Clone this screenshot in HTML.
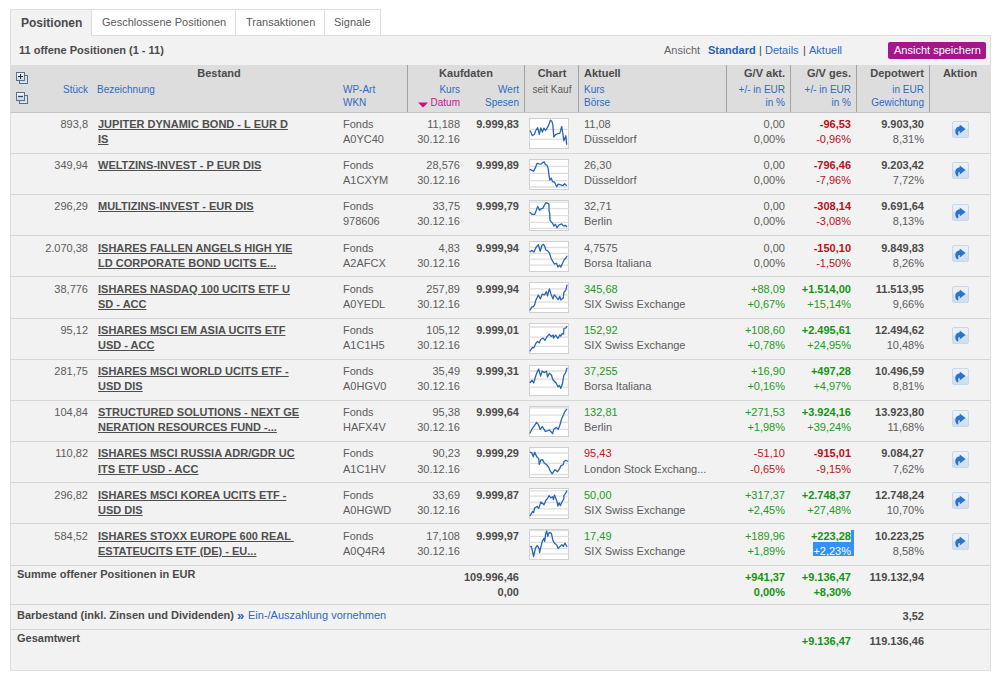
<!DOCTYPE html>
<html><head><meta charset="utf-8"><style>
html,body{margin:0;padding:0;background:#fff;width:1000px;height:681px;overflow:hidden;position:relative;font-family:"Liberation Sans", sans-serif;}
.t{position:absolute;white-space:pre;line-height:14px;}
.panel{position:absolute;left:10px;top:35px;width:979px;height:634px;background:#f2f2f2;border:1px solid #dedede;}
.tab{position:absolute;top:9px;height:25px;background:#fff;border:1px solid #dedede;border-left:none;}
.hdr{position:absolute;left:11px;top:65px;width:979px;height:47px;background:#dddddd;border-bottom:1px solid #c4c4c4;}
.vl{position:absolute;top:65px;width:1px;height:47px;background:#a2a2a2;}
.sep{position:absolute;left:11px;width:979px;height:1px;background:#d6d6d6;}
.ch{position:absolute;left:529px;}
.act{position:absolute;left:952px;width:15px;height:15px;border:1px solid #c6d8ee;border-radius:2px;background:linear-gradient(#e9f1fa 0%,#e6eef8 45%,#d6e2ef 50%,#d3dfec 100%);}
.act svg{position:absolute;left:-1px;top:-1px;}
.btn{position:absolute;left:888px;top:42px;width:98px;height:17px;background:#a4168c;border-radius:2px;}
</style></head><body>
<div class="panel"></div>
<div style="position:absolute;left:10px;top:9px;width:80px;height:26px;background:#f2f2f2;border:1px solid #dedede;border-bottom:none;border-right:none"></div>
<div class="tab" style="left:91px;width:143px;border-left:1px solid #dedede"></div>
<div class="tab" style="left:236px;width:88px"></div>
<div class="tab" style="left:325px;width:55px"></div>
<div class="t" style="left:21px;top:16px;font-size:12px;font-weight:bold;color:#4b4b4b">Positionen</div>
<div class="t" style="left:102px;top:15px;font-size:11px;color:#5a5a5a">Geschlossene Positionen</div>
<div class="t" style="left:246px;top:15px;font-size:11px;color:#5a5a5a">Transaktionen</div>
<div class="t" style="left:334px;top:15px;font-size:11px;color:#5a5a5a">Signale</div>
<div class="t" style="left:19px;top:43px;font-size:11px;font-weight:bold;color:#4b4b4b">11 offene Positionen (1 - 11)</div>
<div class="t" style="left:664px;top:43px;font-size:11px;color:#666">Ansicht</div>
<div class="t" style="left:708px;top:43px;font-size:11px;font-weight:bold;color:#2a62b4">Standard</div>
<div class="t" style="left:759px;top:43px;font-size:11px;color:#444">|</div>
<div class="t" style="left:765px;top:43px;font-size:11px;color:#2a6ac0">Details</div>
<div class="t" style="left:803px;top:43px;font-size:11px;color:#444">|</div>
<div class="t" style="left:809px;top:43px;font-size:11px;color:#2a6ac0">Aktuell</div>
<div class="btn"></div>
<div class="t" style="left:894px;top:43px;font-size:11px;color:#fff">Ansicht speichern</div>
<div class="hdr"></div>
<div class="vl" style="left:407px"></div>
<div class="vl" style="left:524px"></div>
<div class="vl" style="left:578px"></div>
<div class="vl" style="left:726px"></div>
<div class="vl" style="left:790px"></div>
<div class="vl" style="left:856px"></div>
<div class="vl" style="left:929px"></div>
<div class="t" style="top:66px;font-size:11px;color:#4b4b4b;font-weight:bold;left:119px;width:200px;text-align:center;">Bestand</div>
<div class="t" style="top:83px;font-size:10px;color:#2f6bc0;right:912px;text-align:right;">Stück</div>
<div class="t" style="top:83px;font-size:10px;color:#2f6bc0;left:97px;">Bezeichnung</div>
<div class="t" style="top:83px;font-size:10px;color:#2f6bc0;left:343px;">WP-Art</div>
<div class="t" style="top:96px;font-size:10px;color:#2f6bc0;left:343px;">WKN</div>
<div class="t" style="top:66px;font-size:11px;color:#4b4b4b;font-weight:bold;left:366px;width:200px;text-align:center;">Kaufdaten</div>
<div class="t" style="top:83px;font-size:10px;color:#2f6bc0;right:540px;text-align:right;">Kurs</div>
<div class="t" style="top:96px;font-size:10px;color:#c0189c;right:540px;text-align:right;">Datum</div>
<svg style="position:absolute;left:418px;top:102px" width="10" height="6" viewBox="0 0 10 6"><path d="M0 0.5 L10 0.5 L5 5.5 Z" fill="#d8087e"/></svg>
<div class="t" style="top:83px;font-size:10px;color:#2f6bc0;right:481px;text-align:right;">Wert</div>
<div class="t" style="top:96px;font-size:10px;color:#2f6bc0;right:481px;text-align:right;">Spesen</div>
<div class="t" style="top:66px;font-size:11px;color:#4b4b4b;font-weight:bold;left:452px;width:200px;text-align:center;">Chart</div>
<div class="t" style="top:83px;font-size:10px;color:#5c5c5c;left:452px;width:200px;text-align:center;">seit Kauf</div>
<div class="t" style="top:66px;font-size:11px;color:#4b4b4b;font-weight:bold;left:584px;">Aktuell</div>
<div class="t" style="top:83px;font-size:10px;color:#2f6bc0;left:584px;">Kurs</div>
<div class="t" style="top:96px;font-size:10px;color:#2f6bc0;left:584px;">Börse</div>
<div class="t" style="top:66px;font-size:11px;color:#4b4b4b;font-weight:bold;right:215px;text-align:right;">G/V akt.</div>
<div class="t" style="top:83px;font-size:10px;color:#2f6bc0;right:215px;text-align:right;">+/- in EUR</div>
<div class="t" style="top:96px;font-size:10px;color:#2f6bc0;right:215px;text-align:right;">in %</div>
<div class="t" style="top:66px;font-size:11px;color:#4b4b4b;font-weight:bold;right:149px;text-align:right;">G/V ges.</div>
<div class="t" style="top:83px;font-size:10px;color:#2f6bc0;right:149px;text-align:right;">+/- in EUR</div>
<div class="t" style="top:96px;font-size:10px;color:#2f6bc0;right:149px;text-align:right;">in %</div>
<div class="t" style="top:66px;font-size:11px;color:#4b4b4b;font-weight:bold;right:76px;text-align:right;">Depotwert</div>
<div class="t" style="top:83px;font-size:10px;color:#2f6bc0;right:76px;text-align:right;">in EUR</div>
<div class="t" style="top:96px;font-size:10px;color:#2f6bc0;right:76px;text-align:right;">Gewichtung</div>
<div class="t" style="top:66px;font-size:11px;color:#4b4b4b;font-weight:bold;left:860px;width:200px;text-align:center;">Aktion</div>
<svg style="position:absolute;left:16px;top:72px" width="13" height="13" viewBox="0 0 13 13">
<defs><linearGradient id="gi" x1="0" y1="0" x2="0" y2="1"><stop offset="0" stop-color="#f4f7fb"/><stop offset="1" stop-color="#c9d8ea"/></linearGradient></defs>
<rect x="3.5" y="3.5" width="8" height="8" fill="#d5e2f0" stroke="#5b6f8a"/>
<rect x="0.5" y="0.5" width="8" height="8" fill="url(#gi)" stroke="#5b6f8a"/>
<path d="M4.5 2 V7 M2 4.5 H7" stroke="#1f2a3a" stroke-width="1"/></svg>
<svg style="position:absolute;left:16px;top:92px" width="13" height="13" viewBox="0 0 13 13">
<rect x="3.5" y="3.5" width="8" height="8" fill="#d5e2f0" stroke="#5b6f8a"/>
<rect x="0.5" y="0.5" width="8" height="8" fill="url(#gi)" stroke="#5b6f8a"/>
<path d="M2 4.5 H7" stroke="#3a4658" stroke-width="1.3"/></svg>
<div class="t" style="top:117px;font-size:11px;right:912px;text-align:right;color:#5c5c5c;">893,8</div>
<div class="t" style="top:117px;font-size:11px;left:98px;font-weight:bold;color:#4f4f4f;text-decoration:underline;">JUPITER DYNAMIC BOND - L EUR D</div>
<div class="t" style="top:132px;font-size:11px;left:98px;font-weight:bold;color:#4f4f4f;text-decoration:underline;">IS</div>
<div class="t" style="top:117px;font-size:11px;left:343px;color:#5c5c5c;">Fonds</div>
<div class="t" style="top:132px;font-size:11px;left:343px;color:#5c5c5c;">A0YC40</div>
<div class="t" style="top:117px;font-size:11px;right:540px;text-align:right;color:#5c5c5c;">11,188</div>
<div class="t" style="top:132px;font-size:11px;right:540px;text-align:right;color:#5c5c5c;">30.12.16</div>
<div class="t" style="top:117px;font-size:11px;right:481px;text-align:right;font-weight:bold;color:#4b4b4b;">9.999,83</div>
<div class="t" style="top:117px;font-size:11px;left:584px;color:#5c5c5c;">11,08</div>
<div class="t" style="top:132px;font-size:11px;left:584px;color:#5c5c5c;">Düsseldorf</div>
<div class="t" style="top:117px;font-size:11px;right:215px;text-align:right;color:#5c5c5c;">0,00</div>
<div class="t" style="top:132px;font-size:11px;right:215px;text-align:right;color:#5c5c5c;">0,00%</div>
<div class="t" style="top:117px;font-size:11px;right:149px;text-align:right;font-weight:bold;color:#b8101a;">-96,53</div>
<div class="t" style="top:132px;font-size:11px;right:149px;text-align:right;color:#b8101a;">-0,96%</div>
<div class="t" style="top:117px;font-size:11px;right:76px;text-align:right;font-weight:bold;color:#4b4b4b;">9.903,30</div>
<div class="t" style="top:132px;font-size:11px;right:76px;text-align:right;color:#5c5c5c;">8,31%</div>
<svg class="ch" style="top:118px" width="40" height="31" viewBox="0 0 40 31"><rect x="0.5" y="0.5" width="39" height="30" fill="#fff" stroke="#d0d0d0"/><g stroke="#dedede" stroke-width="1.3"><line x1="0" x2="40" y1="11.3" y2="11.3"/><line x1="0" x2="40" y1="21.4" y2="21.4"/></g><polyline fill="none" stroke="#2a66b4" stroke-width="1.3" stroke-linejoin="round" points="1.1,12.5 3.3,17.6 5.5,16.3 6.8,12.5 8.7,9.7 10.3,16.3 11.8,10.0 13.4,14.1 15.0,10.0 16.6,12.5 19.1,8.4 21.6,2.1 22.9,3.4 23.8,6.5 24.8,19.2 26.7,16.3 29.2,15.7 30.8,15.4 32.7,8.4 33.6,14.1 34.9,22.9 36.8,17.6 37.7,26.8"/></svg>
<div class="act" style="top:121px"><svg width="17" height="17" viewBox="0 0 17 17"><path d="M7.75 3.4 L13.6 7.9 L7.75 12.4 L7.75 10.0 C7.0 10.0 6.3 10.5 6.2 11.2 C6.1 12.0 6.6 12.8 6.4 13.6 C6.2 14.4 5.6 14.6 5.2 14.3 C3.8 13.4 3.1 11.3 3.3 9.4 C3.6 7.0 5.4 5.4 7.75 5.2 Z" fill="#2a74cc"/></svg></div>
<div class="sep" style="top:153px"></div>
<div class="t" style="top:158px;font-size:11px;right:912px;text-align:right;color:#5c5c5c;">349,94</div>
<div class="t" style="top:158px;font-size:11px;left:98px;font-weight:bold;color:#4f4f4f;text-decoration:underline;">WELTZINS-INVEST - P EUR DIS</div>
<div class="t" style="top:158px;font-size:11px;left:343px;color:#5c5c5c;">Fonds</div>
<div class="t" style="top:173px;font-size:11px;left:343px;color:#5c5c5c;">A1CXYM</div>
<div class="t" style="top:158px;font-size:11px;right:540px;text-align:right;color:#5c5c5c;">28,576</div>
<div class="t" style="top:173px;font-size:11px;right:540px;text-align:right;color:#5c5c5c;">30.12.16</div>
<div class="t" style="top:158px;font-size:11px;right:481px;text-align:right;font-weight:bold;color:#4b4b4b;">9.999,89</div>
<div class="t" style="top:158px;font-size:11px;left:584px;color:#5c5c5c;">26,30</div>
<div class="t" style="top:173px;font-size:11px;left:584px;color:#5c5c5c;">Düsseldorf</div>
<div class="t" style="top:158px;font-size:11px;right:215px;text-align:right;color:#5c5c5c;">0,00</div>
<div class="t" style="top:173px;font-size:11px;right:215px;text-align:right;color:#5c5c5c;">0,00%</div>
<div class="t" style="top:158px;font-size:11px;right:149px;text-align:right;font-weight:bold;color:#b8101a;">-796,46</div>
<div class="t" style="top:173px;font-size:11px;right:149px;text-align:right;color:#b8101a;">-7,96%</div>
<div class="t" style="top:158px;font-size:11px;right:76px;text-align:right;font-weight:bold;color:#4b4b4b;">9.203,42</div>
<div class="t" style="top:173px;font-size:11px;right:76px;text-align:right;color:#5c5c5c;">7,72%</div>
<svg class="ch" style="top:159px" width="40" height="31" viewBox="0 0 40 31"><rect x="0.5" y="0.5" width="39" height="30" fill="#fff" stroke="#d0d0d0"/><g stroke="#dedede" stroke-width="1.3"><line x1="0" x2="40" y1="7.3" y2="7.3"/><line x1="0" x2="40" y1="14.4" y2="14.4"/><line x1="0" x2="40" y1="21.7" y2="21.7"/><line x1="0" x2="40" y1="28.0" y2="28.0"/></g><polyline fill="none" stroke="#2a66b4" stroke-width="1.3" stroke-linejoin="round" points="0.8,10.3 4.6,12.2 6.5,8.4 8.1,4.3 10.3,4.9 12.2,5.2 13.8,3.3 15.3,3.0 16.3,5.6 17.9,6.2 19.1,9.0 19.8,14.7 20.7,21.0 22.3,19.1 23.6,22.9 25.5,22.9 27.7,27.7 29.2,25.1 31.8,25.8 33.7,26.7 35.6,24.8 37.8,26.7"/></svg>
<div class="act" style="top:162px"><svg width="17" height="17" viewBox="0 0 17 17"><path d="M7.75 3.4 L13.6 7.9 L7.75 12.4 L7.75 10.0 C7.0 10.0 6.3 10.5 6.2 11.2 C6.1 12.0 6.6 12.8 6.4 13.6 C6.2 14.4 5.6 14.6 5.2 14.3 C3.8 13.4 3.1 11.3 3.3 9.4 C3.6 7.0 5.4 5.4 7.75 5.2 Z" fill="#2a74cc"/></svg></div>
<div class="sep" style="top:194px"></div>
<div class="t" style="top:199px;font-size:11px;right:912px;text-align:right;color:#5c5c5c;">296,29</div>
<div class="t" style="top:199px;font-size:11px;left:98px;font-weight:bold;color:#4f4f4f;text-decoration:underline;">MULTIZINS-INVEST - EUR DIS</div>
<div class="t" style="top:199px;font-size:11px;left:343px;color:#5c5c5c;">Fonds</div>
<div class="t" style="top:214px;font-size:11px;left:343px;color:#5c5c5c;">978606</div>
<div class="t" style="top:199px;font-size:11px;right:540px;text-align:right;color:#5c5c5c;">33,75</div>
<div class="t" style="top:214px;font-size:11px;right:540px;text-align:right;color:#5c5c5c;">30.12.16</div>
<div class="t" style="top:199px;font-size:11px;right:481px;text-align:right;font-weight:bold;color:#4b4b4b;">9.999,79</div>
<div class="t" style="top:199px;font-size:11px;left:584px;color:#5c5c5c;">32,71</div>
<div class="t" style="top:214px;font-size:11px;left:584px;color:#5c5c5c;">Berlin</div>
<div class="t" style="top:199px;font-size:11px;right:215px;text-align:right;color:#5c5c5c;">0,00</div>
<div class="t" style="top:214px;font-size:11px;right:215px;text-align:right;color:#5c5c5c;">0,00%</div>
<div class="t" style="top:199px;font-size:11px;right:149px;text-align:right;font-weight:bold;color:#b8101a;">-308,14</div>
<div class="t" style="top:214px;font-size:11px;right:149px;text-align:right;color:#b8101a;">-3,08%</div>
<div class="t" style="top:199px;font-size:11px;right:76px;text-align:right;font-weight:bold;color:#4b4b4b;">9.691,64</div>
<div class="t" style="top:214px;font-size:11px;right:76px;text-align:right;color:#5c5c5c;">8,13%</div>
<svg class="ch" style="top:200px" width="40" height="31" viewBox="0 0 40 31"><rect x="0.5" y="0.5" width="39" height="30" fill="#fff" stroke="#d0d0d0"/><g stroke="#dedede" stroke-width="1.3"><line x1="0" x2="40" y1="2.1" y2="2.1"/><line x1="0" x2="40" y1="8.6" y2="8.6"/><line x1="0" x2="40" y1="15.7" y2="15.7"/><line x1="0" x2="40" y1="22.3" y2="22.3"/><line x1="0" x2="40" y1="28.3" y2="28.3"/></g><polyline fill="none" stroke="#2a66b4" stroke-width="1.3" stroke-linejoin="round" points="0.8,12.2 3.3,14.4 5.8,14.4 8.7,6.5 10.6,10.3 12.2,8.7 13.7,8.4 15.0,5.9 16.9,2.7 18.5,3.4 19.8,3.7 20.1,11.6 20.7,12.9 21.0,20.4 23.8,23.6 24.8,26.1 26.4,24.2 28.0,27.7 29.8,25.1 32.7,23.9 34.3,25.8 36.5,25.5 38.1,27.1"/></svg>
<div class="act" style="top:204px"><svg width="17" height="17" viewBox="0 0 17 17"><path d="M7.75 3.4 L13.6 7.9 L7.75 12.4 L7.75 10.0 C7.0 10.0 6.3 10.5 6.2 11.2 C6.1 12.0 6.6 12.8 6.4 13.6 C6.2 14.4 5.6 14.6 5.2 14.3 C3.8 13.4 3.1 11.3 3.3 9.4 C3.6 7.0 5.4 5.4 7.75 5.2 Z" fill="#2a74cc"/></svg></div>
<div class="sep" style="top:235px"></div>
<div class="t" style="top:241px;font-size:11px;right:912px;text-align:right;color:#5c5c5c;">2.070,38</div>
<div class="t" style="top:241px;font-size:11px;left:98px;font-weight:bold;color:#4f4f4f;text-decoration:underline;">ISHARES FALLEN ANGELS HIGH YIE</div>
<div class="t" style="top:256px;font-size:11px;left:98px;font-weight:bold;color:#4f4f4f;text-decoration:underline;">LD CORPORATE BOND UCITS E...</div>
<div class="t" style="top:241px;font-size:11px;left:343px;color:#5c5c5c;">Fonds</div>
<div class="t" style="top:256px;font-size:11px;left:343px;color:#5c5c5c;">A2AFCX</div>
<div class="t" style="top:241px;font-size:11px;right:540px;text-align:right;color:#5c5c5c;">4,83</div>
<div class="t" style="top:256px;font-size:11px;right:540px;text-align:right;color:#5c5c5c;">30.12.16</div>
<div class="t" style="top:241px;font-size:11px;right:481px;text-align:right;font-weight:bold;color:#4b4b4b;">9.999,94</div>
<div class="t" style="top:241px;font-size:11px;left:584px;color:#5c5c5c;">4,7575</div>
<div class="t" style="top:256px;font-size:11px;left:584px;color:#5c5c5c;">Borsa Italiana</div>
<div class="t" style="top:241px;font-size:11px;right:215px;text-align:right;color:#5c5c5c;">0,00</div>
<div class="t" style="top:256px;font-size:11px;right:215px;text-align:right;color:#5c5c5c;">0,00%</div>
<div class="t" style="top:241px;font-size:11px;right:149px;text-align:right;font-weight:bold;color:#b8101a;">-150,10</div>
<div class="t" style="top:256px;font-size:11px;right:149px;text-align:right;color:#b8101a;">-1,50%</div>
<div class="t" style="top:241px;font-size:11px;right:76px;text-align:right;font-weight:bold;color:#4b4b4b;">9.849,83</div>
<div class="t" style="top:256px;font-size:11px;right:76px;text-align:right;color:#5c5c5c;">8,26%</div>
<svg class="ch" style="top:241px" width="40" height="31" viewBox="0 0 40 31"><rect x="0.5" y="0.5" width="39" height="30" fill="#fff" stroke="#d0d0d0"/><g stroke="#dedede" stroke-width="1.3"><line x1="0" x2="40" y1="6.5" y2="6.5"/><line x1="0" x2="40" y1="12.5" y2="12.5"/><line x1="0" x2="40" y1="18.2" y2="18.2"/><line x1="0" x2="40" y1="24.2" y2="24.2"/></g><polyline fill="none" stroke="#2a66b4" stroke-width="1.3" stroke-linejoin="round" points="0.8,11.0 3.0,9.4 4.9,11.0 7.1,6.2 9.3,3.7 11.2,10.3 13.1,4.0 14.4,3.4 15.6,5.2 16.9,9.0 18.5,9.7 20.4,11.9 22.0,17.0 23.8,20.7 25.7,23.0 27.6,22.3 28.9,26.1 30.5,24.2 31.7,26.1 33.6,22.3 35.2,18.8 36.8,17.2 38.1,14.7"/></svg>
<div class="act" style="top:245px"><svg width="17" height="17" viewBox="0 0 17 17"><path d="M7.75 3.4 L13.6 7.9 L7.75 12.4 L7.75 10.0 C7.0 10.0 6.3 10.5 6.2 11.2 C6.1 12.0 6.6 12.8 6.4 13.6 C6.2 14.4 5.6 14.6 5.2 14.3 C3.8 13.4 3.1 11.3 3.3 9.4 C3.6 7.0 5.4 5.4 7.75 5.2 Z" fill="#2a74cc"/></svg></div>
<div class="sep" style="top:276px"></div>
<div class="t" style="top:282px;font-size:11px;right:912px;text-align:right;color:#5c5c5c;">38,776</div>
<div class="t" style="top:282px;font-size:11px;left:98px;font-weight:bold;color:#4f4f4f;text-decoration:underline;">ISHARES NASDAQ 100 UCITS ETF U</div>
<div class="t" style="top:297px;font-size:11px;left:98px;font-weight:bold;color:#4f4f4f;text-decoration:underline;">SD - ACC</div>
<div class="t" style="top:282px;font-size:11px;left:343px;color:#5c5c5c;">Fonds</div>
<div class="t" style="top:297px;font-size:11px;left:343px;color:#5c5c5c;">A0YEDL</div>
<div class="t" style="top:282px;font-size:11px;right:540px;text-align:right;color:#5c5c5c;">257,89</div>
<div class="t" style="top:297px;font-size:11px;right:540px;text-align:right;color:#5c5c5c;">30.12.16</div>
<div class="t" style="top:282px;font-size:11px;right:481px;text-align:right;font-weight:bold;color:#4b4b4b;">9.999,94</div>
<div class="t" style="top:282px;font-size:11px;left:584px;color:#1e9a1e;">345,68</div>
<div class="t" style="top:297px;font-size:11px;left:584px;color:#5c5c5c;">SIX Swiss Exchange</div>
<div class="t" style="top:282px;font-size:11px;right:215px;text-align:right;color:#1e9a1e;">+88,09</div>
<div class="t" style="top:297px;font-size:11px;right:215px;text-align:right;color:#1e9a1e;">+0,67%</div>
<div class="t" style="top:282px;font-size:11px;right:149px;text-align:right;font-weight:bold;color:#149414;">+1.514,00</div>
<div class="t" style="top:297px;font-size:11px;right:149px;text-align:right;color:#1e9a1e;">+15,14%</div>
<div class="t" style="top:282px;font-size:11px;right:76px;text-align:right;font-weight:bold;color:#4b4b4b;">11.513,95</div>
<div class="t" style="top:297px;font-size:11px;right:76px;text-align:right;color:#5c5c5c;">9,66%</div>
<svg class="ch" style="top:282px" width="40" height="31" viewBox="0 0 40 31"><rect x="0.5" y="0.5" width="39" height="30" fill="#fff" stroke="#d0d0d0"/><g stroke="#dedede" stroke-width="1.3"><line x1="0" x2="40" y1="6.8" y2="6.8"/><line x1="0" x2="40" y1="13.2" y2="13.2"/><line x1="0" x2="40" y1="20.1" y2="20.1"/><line x1="0" x2="40" y1="26.4" y2="26.4"/></g><polyline fill="none" stroke="#2a66b4" stroke-width="1.3" stroke-linejoin="round" points="0.8,28.3 3.0,24.8 4.6,24.5 5.9,22.0 6.8,18.2 9.3,13.1 11.5,16.9 13.1,12.2 15.6,12.8 17.5,9.7 18.5,13.8 20.4,6.8 22.0,11.9 23.8,16.9 25.4,12.8 29.2,17.6 30.8,14.4 31.7,17.9 34.3,16.0 34.9,10.3 36.8,8.4 38.1,2.7"/></svg>
<div class="act" style="top:286px"><svg width="17" height="17" viewBox="0 0 17 17"><path d="M7.75 3.4 L13.6 7.9 L7.75 12.4 L7.75 10.0 C7.0 10.0 6.3 10.5 6.2 11.2 C6.1 12.0 6.6 12.8 6.4 13.6 C6.2 14.4 5.6 14.6 5.2 14.3 C3.8 13.4 3.1 11.3 3.3 9.4 C3.6 7.0 5.4 5.4 7.75 5.2 Z" fill="#2a74cc"/></svg></div>
<div class="sep" style="top:318px"></div>
<div class="t" style="top:323px;font-size:11px;right:912px;text-align:right;color:#5c5c5c;">95,12</div>
<div class="t" style="top:323px;font-size:11px;left:98px;font-weight:bold;color:#4f4f4f;text-decoration:underline;">ISHARES MSCI EM ASIA UCITS ETF</div>
<div class="t" style="top:338px;font-size:11px;left:98px;font-weight:bold;color:#4f4f4f;text-decoration:underline;">USD - ACC</div>
<div class="t" style="top:323px;font-size:11px;left:343px;color:#5c5c5c;">Fonds</div>
<div class="t" style="top:338px;font-size:11px;left:343px;color:#5c5c5c;">A1C1H5</div>
<div class="t" style="top:323px;font-size:11px;right:540px;text-align:right;color:#5c5c5c;">105,12</div>
<div class="t" style="top:338px;font-size:11px;right:540px;text-align:right;color:#5c5c5c;">30.12.16</div>
<div class="t" style="top:323px;font-size:11px;right:481px;text-align:right;font-weight:bold;color:#4b4b4b;">9.999,01</div>
<div class="t" style="top:323px;font-size:11px;left:584px;color:#1e9a1e;">152,92</div>
<div class="t" style="top:338px;font-size:11px;left:584px;color:#5c5c5c;">SIX Swiss Exchange</div>
<div class="t" style="top:323px;font-size:11px;right:215px;text-align:right;color:#1e9a1e;">+108,60</div>
<div class="t" style="top:338px;font-size:11px;right:215px;text-align:right;color:#1e9a1e;">+0,78%</div>
<div class="t" style="top:323px;font-size:11px;right:149px;text-align:right;font-weight:bold;color:#149414;">+2.495,61</div>
<div class="t" style="top:338px;font-size:11px;right:149px;text-align:right;color:#1e9a1e;">+24,95%</div>
<div class="t" style="top:323px;font-size:11px;right:76px;text-align:right;font-weight:bold;color:#4b4b4b;">12.494,62</div>
<div class="t" style="top:338px;font-size:11px;right:76px;text-align:right;color:#5c5c5c;">10,48%</div>
<svg class="ch" style="top:323px" width="40" height="31" viewBox="0 0 40 31"><rect x="0.5" y="0.5" width="39" height="30" fill="#fff" stroke="#d0d0d0"/><g stroke="#dedede" stroke-width="1.3"><line x1="0" x2="40" y1="4.0" y2="4.0"/><line x1="0" x2="40" y1="14.1" y2="14.1"/><line x1="0" x2="40" y1="23.3" y2="23.3"/></g><polyline fill="none" stroke="#2a66b4" stroke-width="1.3" stroke-linejoin="round" points="0.8,28.3 3.3,24.5 4.9,24.8 6.8,20.4 8.4,18.5 10.3,19.8 11.9,16.3 14.1,15.1 16.0,17.3 17.9,13.8 20.4,11.3 22.3,13.5 24.2,11.9 24.5,15.1 26.7,12.2 28.9,15.4 30.8,11.9 31.8,13.2 33.0,10.6 34.6,11.0 34.9,5.6 36.8,5.0 38.1,3.1"/></svg>
<div class="act" style="top:327px"><svg width="17" height="17" viewBox="0 0 17 17"><path d="M7.75 3.4 L13.6 7.9 L7.75 12.4 L7.75 10.0 C7.0 10.0 6.3 10.5 6.2 11.2 C6.1 12.0 6.6 12.8 6.4 13.6 C6.2 14.4 5.6 14.6 5.2 14.3 C3.8 13.4 3.1 11.3 3.3 9.4 C3.6 7.0 5.4 5.4 7.75 5.2 Z" fill="#2a74cc"/></svg></div>
<div class="sep" style="top:359px"></div>
<div class="t" style="top:364px;font-size:11px;right:912px;text-align:right;color:#5c5c5c;">281,75</div>
<div class="t" style="top:364px;font-size:11px;left:98px;font-weight:bold;color:#4f4f4f;text-decoration:underline;">ISHARES MSCI WORLD UCITS ETF -</div>
<div class="t" style="top:379px;font-size:11px;left:98px;font-weight:bold;color:#4f4f4f;text-decoration:underline;">USD DIS</div>
<div class="t" style="top:364px;font-size:11px;left:343px;color:#5c5c5c;">Fonds</div>
<div class="t" style="top:379px;font-size:11px;left:343px;color:#5c5c5c;">A0HGV0</div>
<div class="t" style="top:364px;font-size:11px;right:540px;text-align:right;color:#5c5c5c;">35,49</div>
<div class="t" style="top:379px;font-size:11px;right:540px;text-align:right;color:#5c5c5c;">30.12.16</div>
<div class="t" style="top:364px;font-size:11px;right:481px;text-align:right;font-weight:bold;color:#4b4b4b;">9.999,31</div>
<div class="t" style="top:364px;font-size:11px;left:584px;color:#1e9a1e;">37,255</div>
<div class="t" style="top:379px;font-size:11px;left:584px;color:#5c5c5c;">Borsa Italiana</div>
<div class="t" style="top:364px;font-size:11px;right:215px;text-align:right;color:#1e9a1e;">+16,90</div>
<div class="t" style="top:379px;font-size:11px;right:215px;text-align:right;color:#1e9a1e;">+0,16%</div>
<div class="t" style="top:364px;font-size:11px;right:149px;text-align:right;font-weight:bold;color:#149414;">+497,28</div>
<div class="t" style="top:379px;font-size:11px;right:149px;text-align:right;color:#1e9a1e;">+4,97%</div>
<div class="t" style="top:364px;font-size:11px;right:76px;text-align:right;font-weight:bold;color:#4b4b4b;">10.496,59</div>
<div class="t" style="top:379px;font-size:11px;right:76px;text-align:right;color:#5c5c5c;">8,81%</div>
<svg class="ch" style="top:365px" width="40" height="31" viewBox="0 0 40 31"><rect x="0.5" y="0.5" width="39" height="30" fill="#fff" stroke="#d0d0d0"/><g stroke="#dedede" stroke-width="1.3"><line x1="0" x2="40" y1="6.0" y2="6.0"/><line x1="0" x2="40" y1="14.2" y2="14.2"/><line x1="0" x2="40" y1="22.1" y2="22.1"/></g><polyline fill="none" stroke="#2a66b4" stroke-width="1.3" stroke-linejoin="round" points="0.8,18.0 3.0,15.2 4.6,18.0 6.5,11.7 7.8,7.9 9.7,4.1 11.6,11.1 13.1,6.0 15.3,7.6 17.6,6.3 18.5,12.0 20.4,8.2 22.3,9.8 23.9,14.8 27.3,18.3 28.9,21.8 30.5,20.5 31.8,23.4 33.3,19.3 34.9,10.1 36.5,7.9 38.1,2.8"/></svg>
<div class="act" style="top:368px"><svg width="17" height="17" viewBox="0 0 17 17"><path d="M7.75 3.4 L13.6 7.9 L7.75 12.4 L7.75 10.0 C7.0 10.0 6.3 10.5 6.2 11.2 C6.1 12.0 6.6 12.8 6.4 13.6 C6.2 14.4 5.6 14.6 5.2 14.3 C3.8 13.4 3.1 11.3 3.3 9.4 C3.6 7.0 5.4 5.4 7.75 5.2 Z" fill="#2a74cc"/></svg></div>
<div class="sep" style="top:400px"></div>
<div class="t" style="top:405px;font-size:11px;right:912px;text-align:right;color:#5c5c5c;">104,84</div>
<div class="t" style="top:405px;font-size:11px;left:98px;font-weight:bold;color:#4f4f4f;text-decoration:underline;">STRUCTURED SOLUTIONS - NEXT GE</div>
<div class="t" style="top:420px;font-size:11px;left:98px;font-weight:bold;color:#4f4f4f;text-decoration:underline;">NERATION RESOURCES FUND -...</div>
<div class="t" style="top:405px;font-size:11px;left:343px;color:#5c5c5c;">Fonds</div>
<div class="t" style="top:420px;font-size:11px;left:343px;color:#5c5c5c;">HAFX4V</div>
<div class="t" style="top:405px;font-size:11px;right:540px;text-align:right;color:#5c5c5c;">95,38</div>
<div class="t" style="top:420px;font-size:11px;right:540px;text-align:right;color:#5c5c5c;">30.12.16</div>
<div class="t" style="top:405px;font-size:11px;right:481px;text-align:right;font-weight:bold;color:#4b4b4b;">9.999,64</div>
<div class="t" style="top:405px;font-size:11px;left:584px;color:#1e9a1e;">132,81</div>
<div class="t" style="top:420px;font-size:11px;left:584px;color:#5c5c5c;">Berlin</div>
<div class="t" style="top:405px;font-size:11px;right:215px;text-align:right;color:#1e9a1e;">+271,53</div>
<div class="t" style="top:420px;font-size:11px;right:215px;text-align:right;color:#1e9a1e;">+1,98%</div>
<div class="t" style="top:405px;font-size:11px;right:149px;text-align:right;font-weight:bold;color:#149414;">+3.924,16</div>
<div class="t" style="top:420px;font-size:11px;right:149px;text-align:right;color:#1e9a1e;">+39,24%</div>
<div class="t" style="top:405px;font-size:11px;right:76px;text-align:right;font-weight:bold;color:#4b4b4b;">13.923,80</div>
<div class="t" style="top:420px;font-size:11px;right:76px;text-align:right;color:#5c5c5c;">11,68%</div>
<svg class="ch" style="top:406px" width="40" height="31" viewBox="0 0 40 31"><rect x="0.5" y="0.5" width="39" height="30" fill="#fff" stroke="#d0d0d0"/><g stroke="#dedede" stroke-width="1.3"><line x1="0" x2="40" y1="1.9" y2="1.9"/><line x1="0" x2="40" y1="9.2" y2="9.2"/><line x1="0" x2="40" y1="16.4" y2="16.4"/><line x1="0" x2="40" y1="23.4" y2="23.4"/></g><polyline fill="none" stroke="#2a66b4" stroke-width="1.3" stroke-linejoin="round" points="0.8,27.5 3.7,21.8 5.9,19.0 7.5,16.4 9.4,18.6 11.2,23.4 13.4,20.5 16.3,25.3 17.9,25.0 20.4,24.0 23.6,27.5 24.8,23.1 27.4,21.5 29.2,23.4 31.1,18.6 32.1,14.5 33.0,12.0 34.6,8.5 35.9,5.4 38.1,2.8"/></svg>
<div class="act" style="top:410px"><svg width="17" height="17" viewBox="0 0 17 17"><path d="M7.75 3.4 L13.6 7.9 L7.75 12.4 L7.75 10.0 C7.0 10.0 6.3 10.5 6.2 11.2 C6.1 12.0 6.6 12.8 6.4 13.6 C6.2 14.4 5.6 14.6 5.2 14.3 C3.8 13.4 3.1 11.3 3.3 9.4 C3.6 7.0 5.4 5.4 7.75 5.2 Z" fill="#2a74cc"/></svg></div>
<div class="sep" style="top:441px"></div>
<div class="t" style="top:446px;font-size:11px;right:912px;text-align:right;color:#5c5c5c;">110,82</div>
<div class="t" style="top:446px;font-size:11px;left:98px;font-weight:bold;color:#4f4f4f;text-decoration:underline;">ISHARES MSCI RUSSIA ADR/GDR UC</div>
<div class="t" style="top:462px;font-size:11px;left:98px;font-weight:bold;color:#4f4f4f;text-decoration:underline;">ITS ETF USD - ACC</div>
<div class="t" style="top:446px;font-size:11px;left:343px;color:#5c5c5c;">Fonds</div>
<div class="t" style="top:462px;font-size:11px;left:343px;color:#5c5c5c;">A1C1HV</div>
<div class="t" style="top:446px;font-size:11px;right:540px;text-align:right;color:#5c5c5c;">90,23</div>
<div class="t" style="top:462px;font-size:11px;right:540px;text-align:right;color:#5c5c5c;">30.12.16</div>
<div class="t" style="top:446px;font-size:11px;right:481px;text-align:right;font-weight:bold;color:#4b4b4b;">9.999,29</div>
<div class="t" style="top:446px;font-size:11px;left:584px;color:#c0141c;">95,43</div>
<div class="t" style="top:462px;font-size:11px;left:584px;color:#5c5c5c;">London Stock Exchang...</div>
<div class="t" style="top:446px;font-size:11px;right:215px;text-align:right;color:#c0141c;">-51,10</div>
<div class="t" style="top:462px;font-size:11px;right:215px;text-align:right;color:#c0141c;">-0,65%</div>
<div class="t" style="top:446px;font-size:11px;right:149px;text-align:right;font-weight:bold;color:#b8101a;">-915,01</div>
<div class="t" style="top:462px;font-size:11px;right:149px;text-align:right;color:#b8101a;">-9,15%</div>
<div class="t" style="top:446px;font-size:11px;right:76px;text-align:right;font-weight:bold;color:#4b4b4b;">9.084,27</div>
<div class="t" style="top:462px;font-size:11px;right:76px;text-align:right;color:#5c5c5c;">7,62%</div>
<svg class="ch" style="top:447px" width="40" height="31" viewBox="0 0 40 31"><rect x="0.5" y="0.5" width="39" height="30" fill="#fff" stroke="#d0d0d0"/><g stroke="#dedede" stroke-width="1.3"><line x1="0" x2="40" y1="6.0" y2="6.0"/><line x1="0" x2="40" y1="16.4" y2="16.4"/><line x1="0" x2="40" y1="27.5" y2="27.5"/></g><polyline fill="none" stroke="#2a66b4" stroke-width="1.3" stroke-linejoin="round" points="0.8,5.1 2.7,5.7 4.3,9.8 5.6,5.1 7.8,9.8 9.7,11.7 10.3,17.4 11.9,12.9 13.5,12.6 15.3,16.1 17.9,18.0 19.8,20.5 21.0,23.7 23.2,26.8 25.8,22.7 28.6,24.6 30.2,22.4 32.1,18.6 34.3,17.7 34.9,14.8 36.8,13.3 39.0,14.5"/></svg>
<div class="act" style="top:451px"><svg width="17" height="17" viewBox="0 0 17 17"><path d="M7.75 3.4 L13.6 7.9 L7.75 12.4 L7.75 10.0 C7.0 10.0 6.3 10.5 6.2 11.2 C6.1 12.0 6.6 12.8 6.4 13.6 C6.2 14.4 5.6 14.6 5.2 14.3 C3.8 13.4 3.1 11.3 3.3 9.4 C3.6 7.0 5.4 5.4 7.75 5.2 Z" fill="#2a74cc"/></svg></div>
<div class="sep" style="top:482px"></div>
<div class="t" style="top:488px;font-size:11px;right:912px;text-align:right;color:#5c5c5c;">296,82</div>
<div class="t" style="top:488px;font-size:11px;left:98px;font-weight:bold;color:#4f4f4f;text-decoration:underline;">ISHARES MSCI KOREA UCITS ETF -</div>
<div class="t" style="top:503px;font-size:11px;left:98px;font-weight:bold;color:#4f4f4f;text-decoration:underline;">USD DIS</div>
<div class="t" style="top:488px;font-size:11px;left:343px;color:#5c5c5c;">Fonds</div>
<div class="t" style="top:503px;font-size:11px;left:343px;color:#5c5c5c;">A0HGWD</div>
<div class="t" style="top:488px;font-size:11px;right:540px;text-align:right;color:#5c5c5c;">33,69</div>
<div class="t" style="top:503px;font-size:11px;right:540px;text-align:right;color:#5c5c5c;">30.12.16</div>
<div class="t" style="top:488px;font-size:11px;right:481px;text-align:right;font-weight:bold;color:#4b4b4b;">9.999,87</div>
<div class="t" style="top:488px;font-size:11px;left:584px;color:#1e9a1e;">50,00</div>
<div class="t" style="top:503px;font-size:11px;left:584px;color:#5c5c5c;">SIX Swiss Exchange</div>
<div class="t" style="top:488px;font-size:11px;right:215px;text-align:right;color:#1e9a1e;">+317,37</div>
<div class="t" style="top:503px;font-size:11px;right:215px;text-align:right;color:#1e9a1e;">+2,45%</div>
<div class="t" style="top:488px;font-size:11px;right:149px;text-align:right;font-weight:bold;color:#149414;">+2.748,37</div>
<div class="t" style="top:503px;font-size:11px;right:149px;text-align:right;color:#1e9a1e;">+27,48%</div>
<div class="t" style="top:488px;font-size:11px;right:76px;text-align:right;font-weight:bold;color:#4b4b4b;">12.748,24</div>
<div class="t" style="top:503px;font-size:11px;right:76px;text-align:right;color:#5c5c5c;">10,70%</div>
<svg class="ch" style="top:488px" width="40" height="31" viewBox="0 0 40 31"><rect x="0.5" y="0.5" width="39" height="30" fill="#fff" stroke="#d0d0d0"/><g stroke="#dedede" stroke-width="1.3"><line x1="0" x2="40" y1="2.8" y2="2.8"/><line x1="0" x2="40" y1="8.2" y2="8.2"/><line x1="0" x2="40" y1="14.5" y2="14.5"/><line x1="0" x2="40" y1="20.8" y2="20.8"/><line x1="0" x2="40" y1="27.2" y2="27.2"/></g><polyline fill="none" stroke="#2a66b4" stroke-width="1.3" stroke-linejoin="round" points="0.8,28.1 3.7,23.4 4.6,24.6 5.6,20.1 8.1,18.5 9.7,20.4 11.9,13.9 15.0,16.7 17.2,11.7 18.2,11.0 20.1,7.6 21.7,9.8 23.6,8.8 24.5,11.7 25.5,6.9 28.0,13.5 28.9,18.0 30.2,14.8 31.4,17.7 32.7,14.5 34.9,10.7 34.9,7.6 36.5,5.4 38.1,2.5"/></svg>
<div class="act" style="top:492px"><svg width="17" height="17" viewBox="0 0 17 17"><path d="M7.75 3.4 L13.6 7.9 L7.75 12.4 L7.75 10.0 C7.0 10.0 6.3 10.5 6.2 11.2 C6.1 12.0 6.6 12.8 6.4 13.6 C6.2 14.4 5.6 14.6 5.2 14.3 C3.8 13.4 3.1 11.3 3.3 9.4 C3.6 7.0 5.4 5.4 7.75 5.2 Z" fill="#2a74cc"/></svg></div>
<div class="sep" style="top:523px"></div>
<div class="t" style="top:529px;font-size:11px;right:912px;text-align:right;color:#5c5c5c;">584,52</div>
<div class="t" style="top:529px;font-size:11px;left:98px;font-weight:bold;color:#4f4f4f;text-decoration:underline;">ISHARES STOXX EUROPE 600 REAL </div>
<div class="t" style="top:544px;font-size:11px;left:98px;font-weight:bold;color:#4f4f4f;text-decoration:underline;">ESTATEUCITS ETF (DE) - EU...</div>
<div class="t" style="top:529px;font-size:11px;left:343px;color:#5c5c5c;">Fonds</div>
<div class="t" style="top:544px;font-size:11px;left:343px;color:#5c5c5c;">A0Q4R4</div>
<div class="t" style="top:529px;font-size:11px;right:540px;text-align:right;color:#5c5c5c;">17,108</div>
<div class="t" style="top:544px;font-size:11px;right:540px;text-align:right;color:#5c5c5c;">30.12.16</div>
<div class="t" style="top:529px;font-size:11px;right:481px;text-align:right;font-weight:bold;color:#4b4b4b;">9.999,97</div>
<div class="t" style="top:529px;font-size:11px;left:584px;color:#1e9a1e;">17,49</div>
<div class="t" style="top:544px;font-size:11px;left:584px;color:#5c5c5c;">SIX Swiss Exchange</div>
<div class="t" style="top:529px;font-size:11px;right:215px;text-align:right;color:#1e9a1e;">+189,96</div>
<div class="t" style="top:544px;font-size:11px;right:215px;text-align:right;color:#1e9a1e;">+1,89%</div>
<div style="position:absolute;left:851px;top:530px;width:3px;height:12px;background:#3390ff"></div>
<div style="position:absolute;left:813px;top:542px;width:41px;height:14px;background:#3390ff"></div>
<div class="t" style="top:529px;font-size:11px;right:149px;text-align:right;font-weight:bold;color:#149414;">+223,28</div>
<div class="t" style="top:544px;font-size:11px;right:149px;text-align:right;color:#fff;">+2,23%</div>
<div class="t" style="top:529px;font-size:11px;right:76px;text-align:right;font-weight:bold;color:#4b4b4b;">10.223,25</div>
<div class="t" style="top:544px;font-size:11px;right:76px;text-align:right;color:#5c5c5c;">8,58%</div>
<svg class="ch" style="top:529px" width="40" height="31" viewBox="0 0 40 31"><rect x="0.5" y="0.5" width="39" height="30" fill="#fff" stroke="#d0d0d0"/><g stroke="#dedede" stroke-width="1.3"><line x1="0" x2="40" y1="1.6" y2="1.6"/><line x1="0" x2="40" y1="7.3" y2="7.3"/><line x1="0" x2="40" y1="13.3" y2="13.3"/><line x1="0" x2="40" y1="19.6" y2="19.6"/><line x1="0" x2="40" y1="24.9" y2="24.9"/></g><polyline fill="none" stroke="#2a66b4" stroke-width="1.3" stroke-linejoin="round" points="1.1,17.7 2.4,17.4 3.3,21.5 4.6,27.5 6.5,19.0 8.4,16.4 10.3,20.2 10.6,23.7 11.6,19.0 13.2,12.6 15.0,9.2 15.7,12.3 16.6,5.4 17.6,1.9 18.8,7.3 20.1,3.5 22.3,4.1 23.9,11.4 25.5,14.2 27.7,16.1 29.2,19.6 30.8,17.7 33.0,15.8 34.3,17.4 35.9,14.2 38.1,18.0"/></svg>
<div class="act" style="top:533px"><svg width="17" height="17" viewBox="0 0 17 17"><path d="M7.75 3.4 L13.6 7.9 L7.75 12.4 L7.75 10.0 C7.0 10.0 6.3 10.5 6.2 11.2 C6.1 12.0 6.6 12.8 6.4 13.6 C6.2 14.4 5.6 14.6 5.2 14.3 C3.8 13.4 3.1 11.3 3.3 9.4 C3.6 7.0 5.4 5.4 7.75 5.2 Z" fill="#2a74cc"/></svg></div>
<div class="sep" style="top:565px"></div>
<div class="t" style="top:567px;font-size:11px;left:17px;font-weight:bold;color:#4b4b4b;">Summe offener Positionen in EUR</div>
<div class="t" style="top:570px;font-size:11px;right:481px;text-align:right;font-weight:bold;color:#4b4b4b;">109.996,46</div>
<div class="t" style="top:585px;font-size:11px;right:481px;text-align:right;font-weight:bold;color:#4b4b4b;">0,00</div>
<div class="t" style="top:570px;font-size:11px;right:215px;text-align:right;font-weight:bold;color:#149414;">+941,37</div>
<div class="t" style="top:585px;font-size:11px;right:215px;text-align:right;font-weight:bold;color:#149414;">0,00%</div>
<div class="t" style="top:570px;font-size:11px;right:149px;text-align:right;font-weight:bold;color:#149414;">+9.136,47</div>
<div class="t" style="top:585px;font-size:11px;right:149px;text-align:right;font-weight:bold;color:#149414;">+8,30%</div>
<div class="t" style="top:570px;font-size:11px;right:76px;text-align:right;font-weight:bold;color:#4b4b4b;">119.132,94</div>
<div class="sep" style="top:604px"></div>
<div class="t" style="left:17px;top:608px;font-size:11px;font-weight:bold;color:#4b4b4b">Barbestand (inkl. Zinsen und Dividenden) </div><div class="t" style="left:237px;top:609px;font-size:13px;font-weight:bold;color:#2a5aa8">»</div><div class="t" style="left:248px;top:608px;font-size:11px;color:#2d68c0">Ein-/Auszahlung vornehmen</div>
<div class="t" style="top:609px;font-size:11px;right:76px;text-align:right;font-weight:bold;color:#4b4b4b;">3,52</div>
<div class="sep" style="top:629px"></div>
<div class="t" style="top:631px;font-size:11px;left:17px;font-weight:bold;color:#4b4b4b;">Gesamtwert</div>
<div class="t" style="top:634px;font-size:11px;right:149px;text-align:right;font-weight:bold;color:#149414;">+9.136,47</div>
<div class="t" style="top:634px;font-size:11px;right:76px;text-align:right;font-weight:bold;color:#4b4b4b;">119.136,46</div>
</body></html>
